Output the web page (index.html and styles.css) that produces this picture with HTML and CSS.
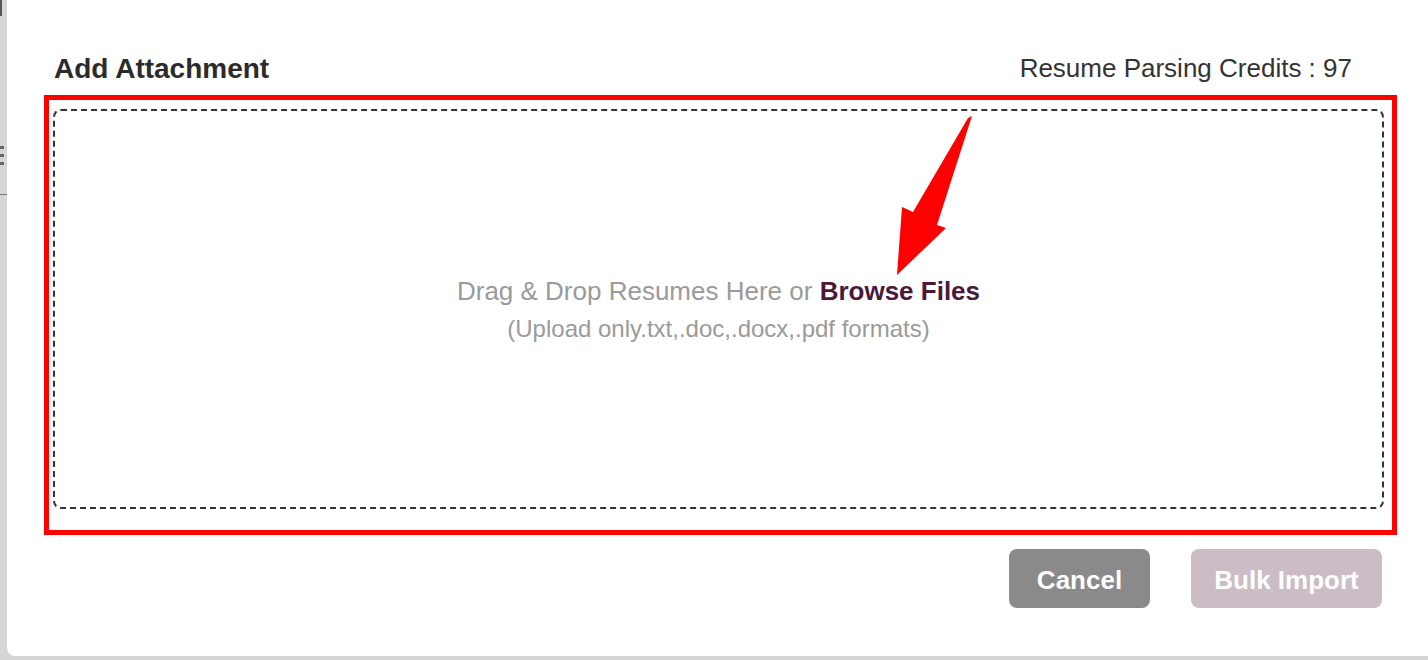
FILE: index.html
```html
<!DOCTYPE html>
<html lang="en">
<head>
  <meta charset="UTF-8" />
  <meta name="viewport" content="width=device-width, initial-scale=1.0" />
  <title>Add Attachment</title>
  <link rel="stylesheet" href="styles.css">
</head>
<body>
  <div class="page">
    <div class="peek">
      <span class="peek-top"></span>
      <span class="peek-menu"></span>
      <span class="peek-menu"></span>
      <span class="peek-menu"></span>
      <span class="peek-line"></span>
    </div>

    <div class="modal">
      <div class="modal-head">
        <h2>Add Attachment</h2>
        <span class="credits">Resume Parsing Credits : 97</span>
      </div>

      <div class="highlight">
        <div class="dropzone">
          <p class="drop-main">Drag &amp; Drop Resumes Here or <a href="#" class="browse">Browse Files</a></p>
          <p class="drop-hint">(Upload only.txt,.doc,.docx,.pdf formats)</p>
        </div>
        <svg class="arrow" viewBox="0 0 120 190" width="120" height="190">
          <polygon points="88,18 92,16 57,125 66,128 17,175 22,107 33,112" fill="#ff0000" />
        </svg>
      </div>

      <div class="actions">
        <button class="btn btn-cancel">Cancel</button>
        <button class="btn btn-import" disabled>Bulk Import</button>
      </div>
    </div>
  </div>
</body>
</html>
```

FILE: styles.css
```css
body {
  margin: 0;
  background-color: #d6d6d6;
  font-family: "Liberation Sans", Arial, Helvetica, sans-serif;
  overflow: hidden;
}
.page {
  display: flex;
  height: 660px;
}
.peek {
  width: 7px;
  display: flex;
  flex-direction: column;
  flex-shrink: 0;
}
.peek-top {
  width: 2px;
  height: 16px;
  background-color: #555;
  margin-bottom: 130px;
}
.peek-menu {
  width: 4px;
  height: 3px;
  background-color: #666;
  margin-bottom: 5px;
}
.peek-line {
  width: 7px;
  height: 1px;
  background-color: #777;
  margin-top: 24px;
}
.modal {
  width: 1440px;
  height: 656px;
  flex-shrink: 0;
  background-color: #ffffff;
  border-bottom-left-radius: 8px;
  box-sizing: border-box;
  padding: 52px 0 0 37px;
}
.modal-head {
  width: 1353px;
  display: flex;
  justify-content: space-between;
  align-items: center;
  padding: 0 45px 0 10px;
  box-sizing: border-box;
  height: 34px;
  margin-bottom: 9px;
}
.modal-head h2 {
  margin: 0;
  font-size: 28px;
  font-weight: bold;
  color: #2b2b2b;
}
.credits {
  font-size: 26px;
  color: #333333;
  margin-top: -2px;
}
.highlight {
  position: relative;
  width: 1353px;
  height: 440px;
  box-sizing: border-box;
  border: 5px solid #ff0000;
  padding: 9px 8px 21px 4px;
  display: flex;
}
.dropzone {
  flex: 1;
  border: 2px dashed #333333;
  border-radius: 8px;
  display: flex;
  flex-direction: column;
  align-items: center;
  justify-content: center;
  padding-top: 2px;
}
.drop-main {
  margin: 0;
  font-size: 26px;
  line-height: 30px;
  color: #9a9a9a;
}
.browse {
  color: #4b1839;
  font-weight: bold;
  text-decoration: none;
}
.drop-hint {
  margin: 8px 0 0;
  font-size: 24px;
  line-height: 30px;
  color: #9a9a9a;
}
.arrow {
  position: absolute;
  left: 831px;
  top: 0;
}
.actions {
  width: 1338px;
  display: flex;
  justify-content: flex-end;
  gap: 41px;
  margin-top: 14px;
}
.btn {
  height: 59px;
  border: none;
  border-radius: 8px;
  padding-top: 4px;
  color: #ffffff;
  font-family: inherit;
  font-size: 26px;
  font-weight: bold;
  cursor: pointer;
}
.btn-cancel {
  width: 141px;
  background-color: #8a8a8a;
}
.btn-import {
  width: 191px;
  background-color: #cbbcc6;
}
```
